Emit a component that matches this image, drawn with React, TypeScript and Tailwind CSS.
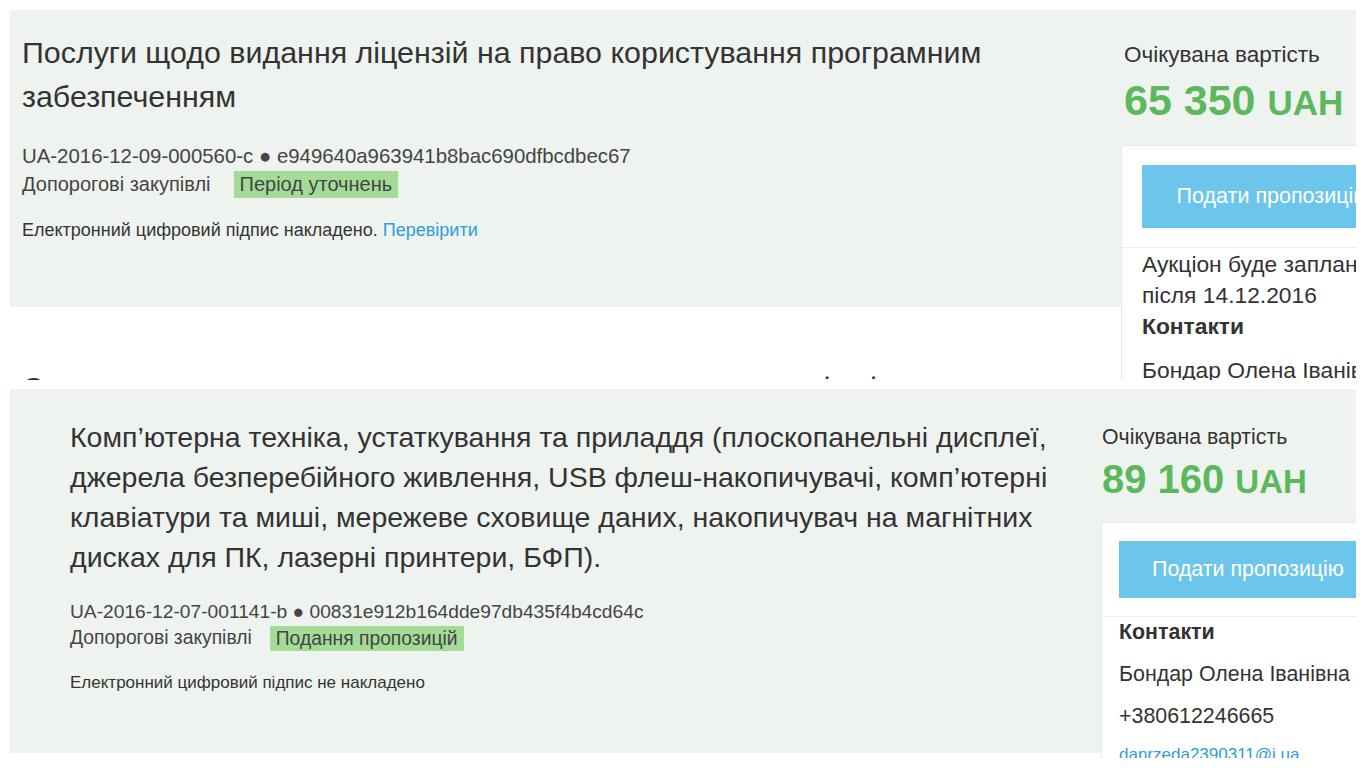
import React from "react";

const F = { fontFamily: '"Liberation Sans", Arial, sans-serif' };

export default function App() {
  return (
    <div className="w-[1366px] h-[768px] overflow-hidden bg-white text-[#333333]" style={F}>
      {/* Section 1 */}
      <div className="w-[1356px] h-[380px] overflow-hidden pt-[10px]">
        <div className="ml-[10px] h-[297px] bg-[#eff3f0] flex">
          <div className="flex-1 min-w-0 pl-[12px] pr-[10px] pt-[20px]">
            <div className="text-[30.4px] leading-[44px] text-[#333]">
              Послуги щодо видання ліцензій на право користування програмним забезпеченням
            </div>
            <div className="mt-[24px] text-[20.4px] leading-[28px] text-[#444] whitespace-nowrap">
              UA-2016-12-09-000560-c ● e949640a963941b8bac690dfbcdbec67
            </div>
            <div className="flex items-center text-[20px] leading-[28px] text-[#444]">
              <span>Допорогові закупівлі</span>
              <span className="ml-[23px] bg-[#a3db97] px-[6px] leading-[27px]">Період уточнень</span>
            </div>
            <div className="mt-[21px] text-[18px] leading-[22px] text-[#333]">
              Електронний цифровий підпис накладено.{" "}
              <span className="text-[#2a9fd6]">Перевірити</span>
            </div>
          </div>
          <div className="w-[235px] shrink-0 pt-[31px]">
            <div className="pl-[3px] text-[22.5px] leading-[28px] text-[#333] whitespace-nowrap">Очікувана вартість</div>
            <div className="mt-[6px] pl-[3px] leading-[50px] font-bold text-[#5cb85c] whitespace-nowrap">
              <span className="text-[43px]">65 350</span>
              <span className="ml-[12px] text-[35px]">UAH</span>
            </div>
            <div className="mt-[10px] w-[300px] bg-white border border-[#e6e8e6]">
              <div className="px-[20px] pt-[19px] pb-[19px]">
                <div className="w-[262px] h-[63px] bg-[#6cc6eb] flex items-center justify-center text-white text-[21.5px] whitespace-nowrap">
                  Подати пропозицію
                </div>
              </div>
              <div className="border-t border-[#eceeec] px-[20px] text-[22.8px] whitespace-nowrap">
                <div className="leading-[31px] pt-[1px]">Аукціон буде заплановано</div>
                <div className="leading-[31px]">після 14.12.2016</div>
                <div className="leading-[31px] font-bold">Контакти</div>
                <div className="mt-[13px] leading-[30px]">Бондар Олена Іванівна</div>
                <div className="mt-[12px] leading-[30px]">+380612246665</div>
              </div>
            </div>
          </div>
        </div>
        <div className="mt-[59px] pl-[22px] text-[30px] leading-[44px] whitespace-nowrap text-[#333]">
          <span>С</span>
          <span className="ml-[780px]">і</span>
          <span className="ml-[40px]">і</span>
        </div>
      </div>

      {/* Section 2 */}
      <div className="w-[1356px] h-[378px] overflow-hidden pt-[9px]">
        <div className="ml-[10px] h-[364px] bg-[#eff3f0] flex">
          <div className="flex-1 min-w-0 pl-[60px] pt-[28px]">
            <div className="text-[28.5px] leading-[40px] text-[#333] w-[995px]">
              Комп’ютерна техніка, устаткування та приладдя (плоскопанельні дисплеї, джерела безперебійного живлення, USB флеш-накопичувачі, комп’ютерні клавіатури та миші, мережеве сховище даних, накопичувач на магнітних дисках для ПК, лазерні принтери, БФП).
            </div>
            <div className="mt-[22px] text-[19.2px] leading-[26px] text-[#444] whitespace-nowrap">
              UA-2016-12-07-001141-b ● 00831e912b164dde97db435f4b4cd64c
            </div>
            <div className="flex items-center text-[19.3px] leading-[26px] text-[#444]">
              <span>Допорогові закупівлі</span>
              <span className="ml-[18px] bg-[#a3db97] px-[6px] leading-[25px]">Подання пропозицій</span>
            </div>
            <div className="mt-[22px] text-[17px] leading-[20px] text-[#333]">
              Електронний цифровий підпис не накладено
            </div>
          </div>
          <div className="w-[255px] shrink-0 pt-[35px]">
            <div className="pl-[1px] text-[21.3px] leading-[26px] text-[#333] whitespace-nowrap">Очікувана вартість</div>
            <div className="mt-[5px] pl-[1px] leading-[48px] font-bold text-[#5cb85c] whitespace-nowrap">
              <span className="text-[40px]">89 160</span>
              <span className="ml-[11px] text-[33px]">UAH</span>
            </div>
            <div className="mt-[10px] w-[300px] bg-white border border-[#e6e8e6]">
              <div className="px-[17px] pt-[18px] pb-[18px]">
                <div className="w-[258px] h-[57px] bg-[#6cc6eb] flex items-center justify-center text-white text-[21.4px] whitespace-nowrap">
                  Подати пропозицію
                </div>
              </div>
              <div className="border-t border-[#eceeec] px-[17px] text-[21.4px] whitespace-nowrap">
                <div className="leading-[30px] font-bold">Контакти</div>
                <div className="mt-[13px] leading-[28px]">Бондар Олена Іванівна</div>
                <div className="mt-[14px] leading-[28px]">+380612246665</div>
                <div className="mt-[15px] leading-[20px] text-[17px] text-[#2a9fd6]">danrzeda2390311@i.ua</div>
              </div>
            </div>
          </div>
        </div>
      </div>
    </div>
  );
}
